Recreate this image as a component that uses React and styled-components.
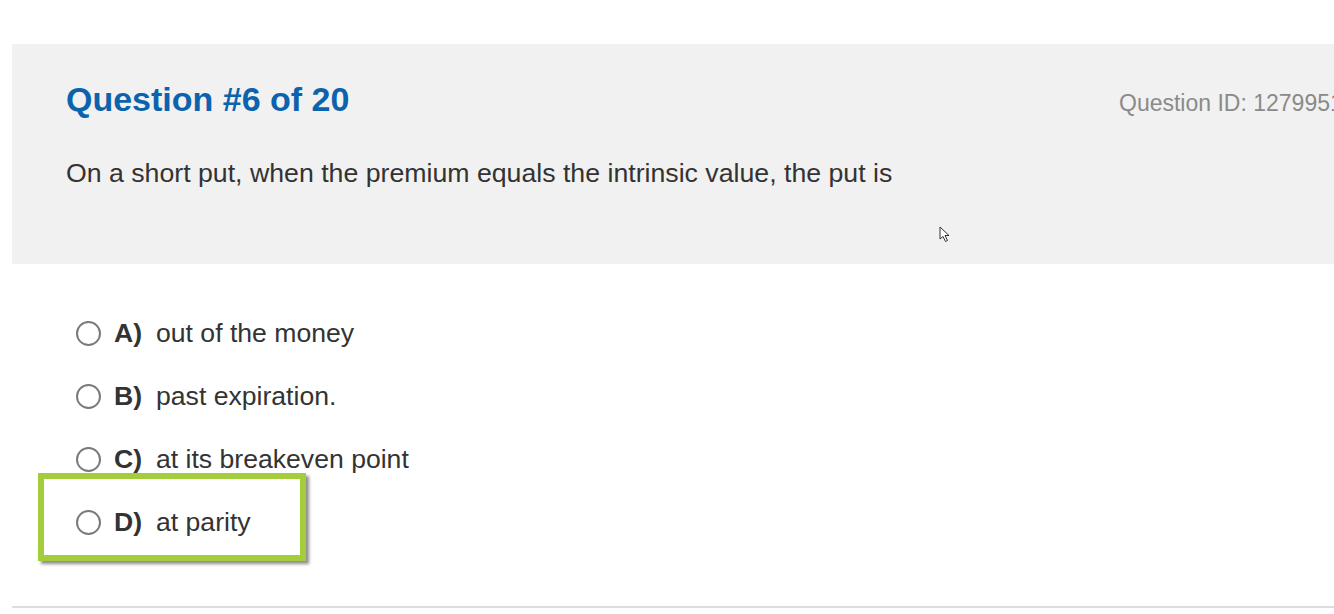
import React from "react";
import styled, { createGlobalStyle } from "styled-components";

const GlobalStyle = createGlobalStyle`
  html, body {
    margin: 0;
    padding: 0;
    background: #ffffff;
    overflow: hidden;
  }
  body {
    font-family: "Liberation Sans", Arial, sans-serif;
  }
`;

const Page = styled.div`
  position: relative;
  width: 1334px;
  height: 614px;
  padding: 44px 0 0 12px;
  box-sizing: border-box;
  overflow: hidden;
`;

const Panel = styled.section`
  width: 1400px;
  height: 220px;
  background: #f1f1f1;
  padding: 35px 0 0 54px;
  box-sizing: border-box;
`;

const Header = styled.div`
  display: grid;
  grid-template-columns: 1053px auto;
  align-items: baseline;
`;

const Title = styled.h2`
  margin: 0;
  font-size: 34px;
  font-weight: bold;
  color: #0c63ad;
  line-height: 40px;
`;

const QuestionId = styled.span`
  font-size: 23px;
  color: #8a8a8a;
  white-space: nowrap;
`;

const Stem = styled.p`
  margin: 38px 0 0;
  font-size: 26.7px;
  color: #333333;
  line-height: 32px;
`;

const Options = styled.ul`
  list-style: none;
  margin: 0;
  padding: 38px 0 0 64px;
`;

const Option = styled.li`
  position: relative;
  display: flex;
  align-items: center;
  height: 63px;
  font-size: 26.6px;
  color: #333333;
`;

const Radio = styled.span`
  width: 21px;
  height: 21px;
  border: 2px solid #7a7a7a;
  border-radius: 50%;
  background: #ffffff;
  flex: none;
`;

const Letter = styled.b`
  margin-left: 13px;
  width: 42px;
  font-weight: bold;
  color: #333333;
`;

const Highlight = styled.span`
  position: absolute;
  left: -38px;
  top: -18px;
  width: 268px;
  height: 88px;
  box-sizing: border-box;
  border: 6px solid #a3cd3b;
  box-shadow: 3px 3px 3px rgba(0, 0, 0, 0.45);
  pointer-events: none;
`;

const Rule = styled.hr`
  margin: 0;
  position: absolute;
  left: 12px;
  right: 0;
  top: 606px;
  border: 0;
  border-top: 2px solid #dddddd;
`;

const Cursor = styled.svg`
  position: absolute;
  left: 939px;
  top: 226px;
`;

const options = [
  { letter: "A)", text: "out of the money" },
  { letter: "B)", text: "past expiration." },
  { letter: "C)", text: "at its breakeven point" },
  { letter: "D)", text: "at parity", marked: true },
];

export default function App() {
  return (
    <Page>
      <GlobalStyle />
      <Panel>
        <Header>
          <Title>Question #6 of 20</Title>
          <QuestionId>Question ID: 1279951</QuestionId>
        </Header>
        <Stem>
          On a short put, when the premium equals the intrinsic value, the put is
        </Stem>
      </Panel>
      <Options>
        {options.map((o) => (
          <Option key={o.letter}>
            <Radio />
            <Letter>{o.letter}</Letter>
            {o.text}
            {o.marked && <Highlight />}
          </Option>
        ))}
      </Options>
      <Rule />
      <Cursor width="12" height="17" viewBox="0 0 12 17">
        <path
          d="M1 1 L1 13 L4 10.5 L6.5 15.5 L8.5 14.5 L6 9.5 L10 9.5 Z"
          fill="#ffffff"
          stroke="#333333"
          strokeWidth="1"
          strokeLinejoin="round"
        />
      </Cursor>
    </Page>
  );
}
